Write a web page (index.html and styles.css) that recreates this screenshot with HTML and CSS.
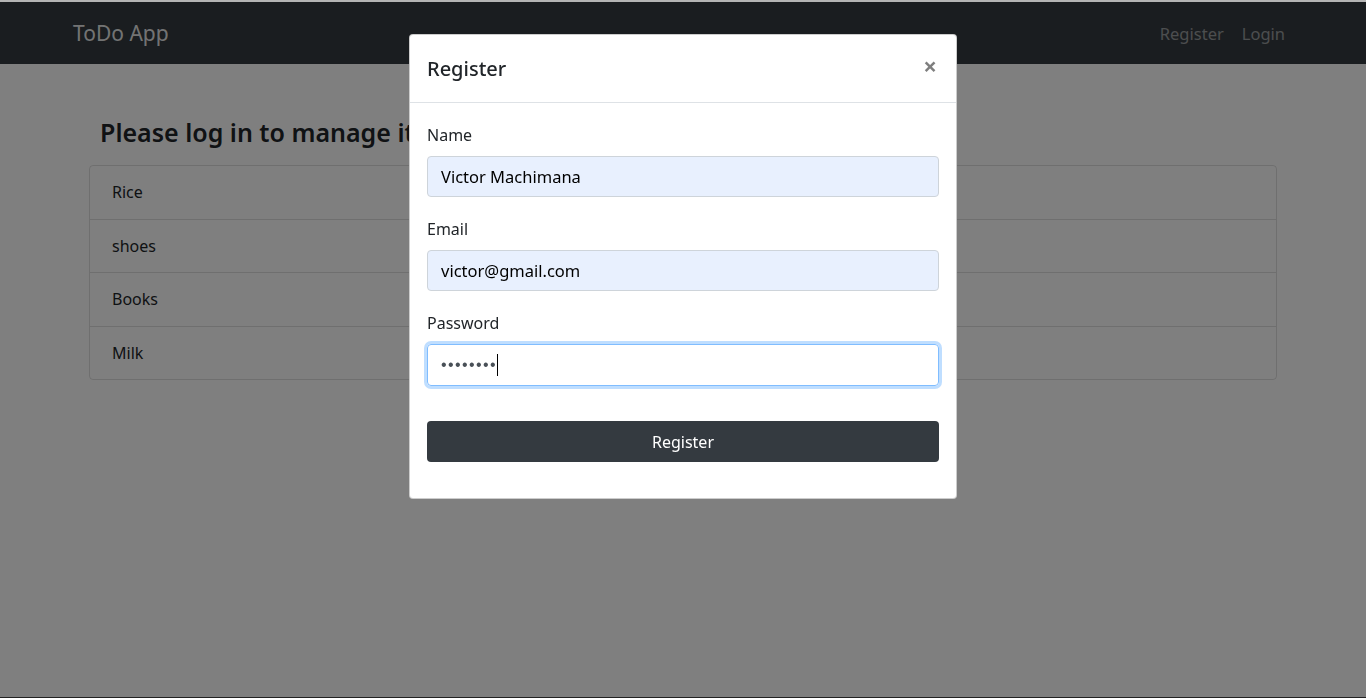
FILE: index.html
```html
<!DOCTYPE html>
<html lang="en">
<head>
<meta charset="utf-8">
<title>ToDo App</title>
<link rel="stylesheet" href="styles.css">
</head>
<body>
<nav class="navbar">
  <a class="brand" href="#">ToDo App</a>
  <div class="nav-links">
    <a href="#">Register</a>
    <a href="#">Login</a>
  </div>
</nav>
<main class="container">
  <h2 class="title">Please log in to manage items</h2>
  <ul class="list-group">
    <li>Rice</li>
    <li>shoes</li>
    <li>Books</li>
    <li>Milk</li>
  </ul>
</main>
<div class="backdrop"></div>
<div class="modal-wrap">
  <div class="modal">
    <div class="modal-header">
      <h5 class="modal-title">Register</h5>
      <span class="close">&times;</span>
    </div>
    <form class="modal-body">
      <label class="label">Name</label>
      <div class="input filled">Victor Machimana</div>
      <label class="label">Email</label>
      <div class="input filled">victor@gmail.com</div>
      <label class="label">Password</label>
      <div class="input focus"><span class="dots">••••••••</span><span class="caret"></span></div>
      <button type="button" class="btn">Register</button>
    </form>
  </div>
</div>
<div class="bottom-line"></div>
</body>
</html>
```
FILE: styles.css
```css
html, body { margin: 0; padding: 0; }
body {
  font-family: "Noto Sans", "Open Sans", sans-serif;
  font-size: 16px;
  color: #212529;
  background: #fff;
  border-top: 2px solid #b4b4b4;
  height: 696px;
  overflow: hidden;
}
a { text-decoration: none; }
.navbar {
  background: #343a40;
  height: 62px;
  display: flex;
  align-items: center;
  justify-content: space-between;
  padding: 0 81px 0 73px;
}
.brand { color: rgba(255,255,255,.9); font-size: 21px; }
.nav-links { display: flex; gap: 18px; }
.nav-links a { color: rgba(255,255,255,.5); font-size: 16.5px; }
.container { width: 1188px; margin: 0 auto; padding-top: 51px; }
.title { font-size: 25px; font-weight: 600; margin: 0 0 16px 11px; line-height: 34px; white-space: nowrap; }
.list-group { list-style: none; margin: 0; padding: 0; border: 1px solid rgba(0,0,0,.125); border-radius: 4px; }
.list-group li { padding: 0 22px; height: 52.5px; line-height: 52.5px; border-top: 1px solid rgba(0,0,0,.125); }
.list-group li:first-child { border-top: 0; }
.backdrop { position: fixed; left: 0; right: 0; top: 2px; bottom: 0; background: rgba(0,0,0,.5); }
.modal-wrap { position: fixed; left: 0; right: 0; top: 34px; display: flex; justify-content: center; }
.modal { width: 546px; background: #fff; border: 1px solid rgba(0,0,0,.2); border-radius: 4px; }
.modal-header { height: 67px; display: flex; align-items: center; justify-content: space-between; padding: 0 19px 0 17px; border-bottom: 1px solid #dee2e6; }
.modal-title { margin: 0; font-size: 20px; font-weight: 500; }
.close { font-size: 24px; font-weight: 700; color: #000; opacity: .5; line-height: 1; margin-top: -6px; }
.modal-body { padding: 20px 17px 36px; display: flex; flex-direction: column; }
.label { display: block; line-height: 24px; margin-bottom: 9px; }
.input { height: 41px; box-sizing: border-box; border: 1px solid #ced4da; border-radius: 4px; padding: 0 13px; display: flex; align-items: center; margin-bottom: 20px; color: #000; font-size: 16.5px; }
.filled { background: #e8f0fe; }
.focus { border-color: #80bdff; box-shadow: 0 0 0 3px rgba(0,123,255,.25); height: 42px; margin-bottom: 35px; }
.dots { color: #495057; font-family: "Liberation Sans", sans-serif; font-size: 16px; letter-spacing: 1.4px; }
.caret { width: 1px; height: 22px; background: #000; margin-left: 0; }
.btn { height: 41px; border: 0; border-radius: 4px; background: #343a40; color: #fff; font-family: inherit; font-size: 16px; }
.bottom-line { position: fixed; left: 0; right: 0; bottom: 0; height: 1px; background: #222; }
```
